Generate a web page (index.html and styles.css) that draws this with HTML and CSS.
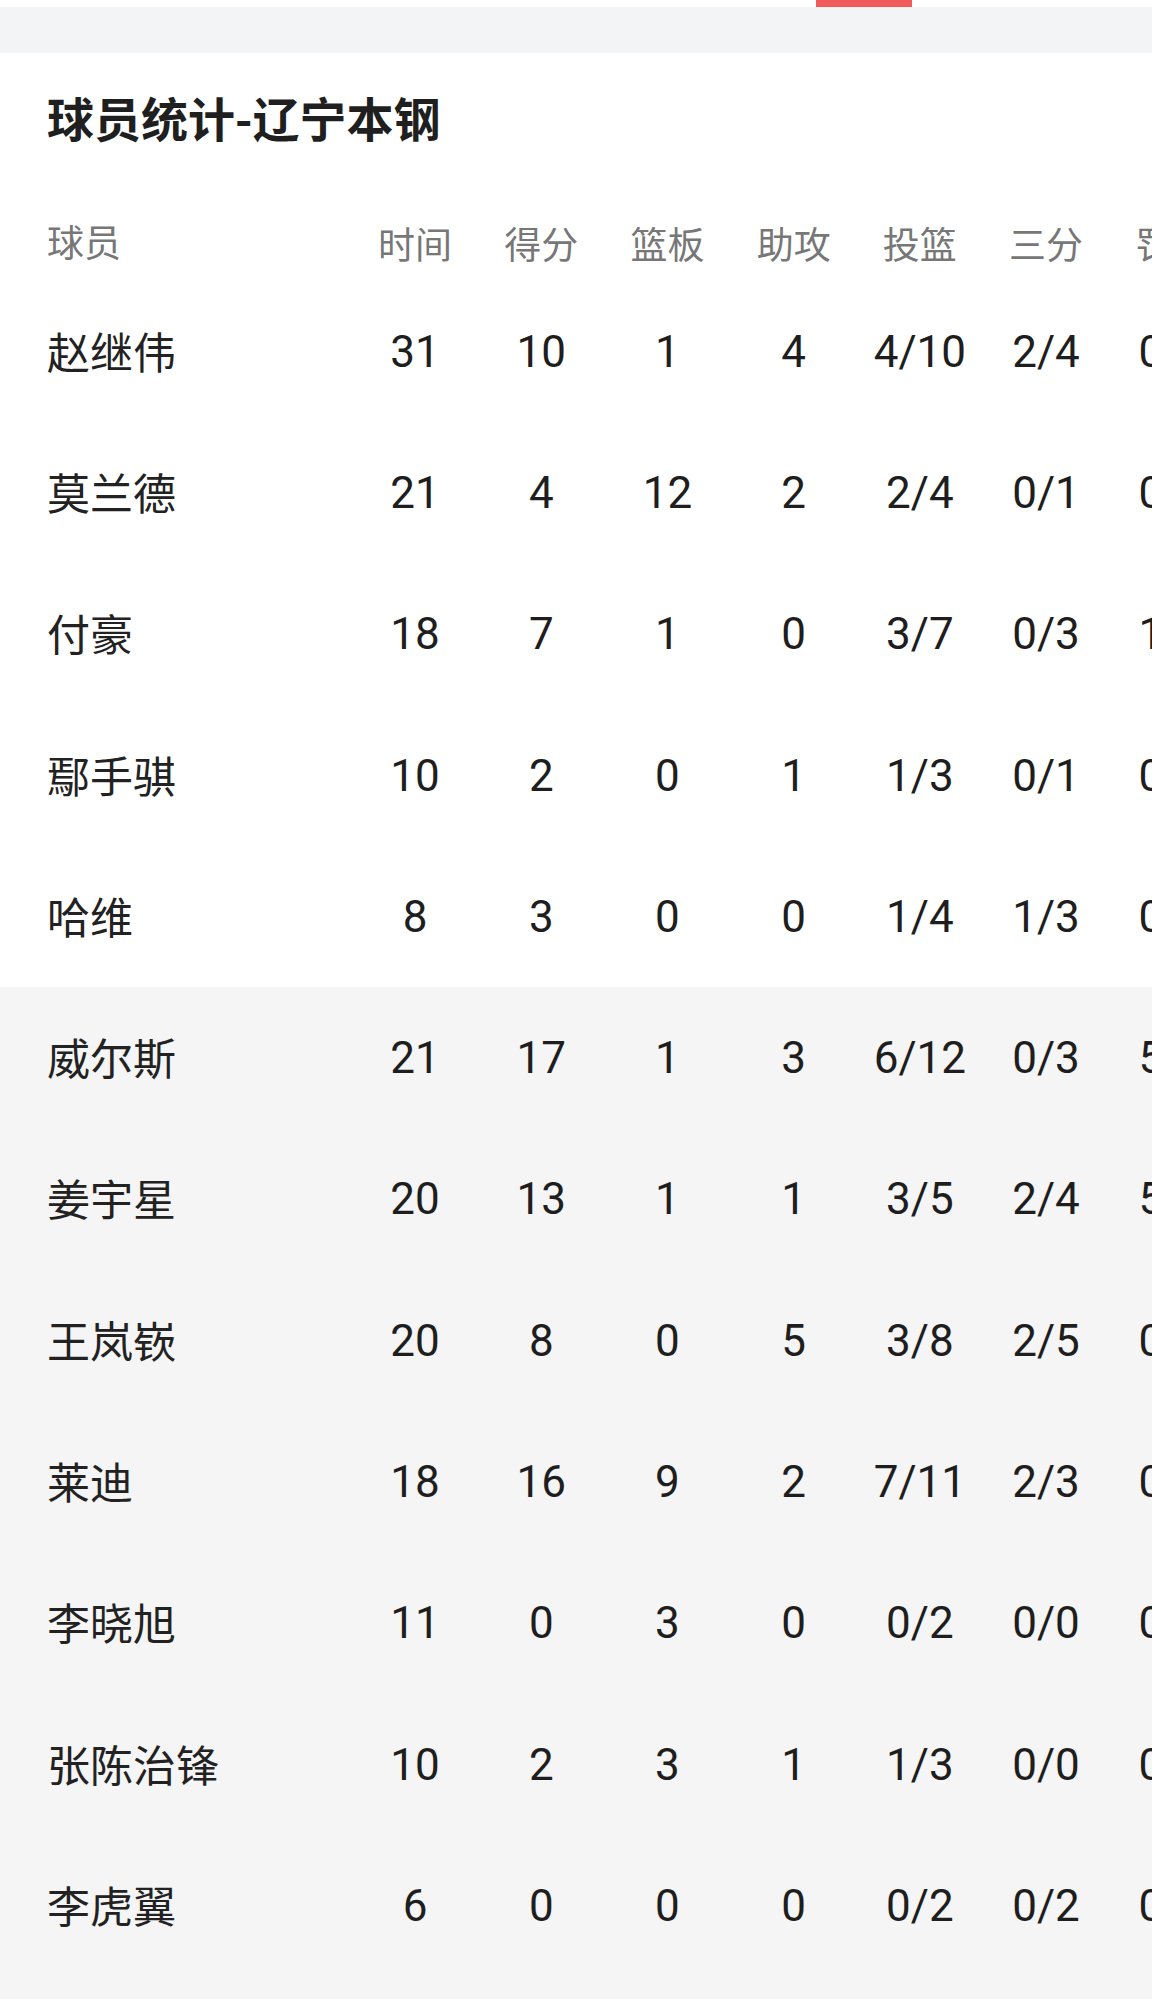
FILE: index.html
```html
<!DOCTYPE html>
<html lang="zh-CN">
<head>
<meta charset="utf-8">
<title>球员统计-辽宁本钢</title>
<link rel="stylesheet" href="styles.css">
</head>
<body>
<div class="topbar"><span class="tab-indicator"></span></div>
<div class="gap"></div>
<section class="card">
  <h2 class="title">球员统计-辽宁本钢</h2>
  <div class="table">
    <div class="row head">
      <span class="name">球员</span>
      <span>时间</span><span>得分</span><span>篮板</span><span>助攻</span><span>投篮</span><span>三分</span><span>罚球</span>
    </div>
    <div class="group starters">
      <div class="row"><span class="name">赵继伟</span><span>31</span><span>10</span><span>1</span><span>4</span><span>4/10</span><span>2/4</span><span>0/0</span></div>
      <div class="row"><span class="name">莫兰德</span><span>21</span><span>4</span><span>12</span><span>2</span><span>2/4</span><span>0/1</span><span>0/0</span></div>
      <div class="row"><span class="name">付豪</span><span>18</span><span>7</span><span>1</span><span>0</span><span>3/7</span><span>0/3</span><span>1/2</span></div>
      <div class="row"><span class="name">鄢手骐</span><span>10</span><span>2</span><span>0</span><span>1</span><span>1/3</span><span>0/1</span><span>0/0</span></div>
      <div class="row"><span class="name">哈维</span><span>8</span><span>3</span><span>0</span><span>0</span><span>1/4</span><span>1/3</span><span>0/0</span></div>
    </div>
    <div class="group bench">
      <div class="row"><span class="name">威尔斯</span><span>21</span><span>17</span><span>1</span><span>3</span><span>6/12</span><span>0/3</span><span>5/6</span></div>
      <div class="row"><span class="name">姜宇星</span><span>20</span><span>13</span><span>1</span><span>1</span><span>3/5</span><span>2/4</span><span>5/5</span></div>
      <div class="row"><span class="name">王岚嵚</span><span>20</span><span>8</span><span>0</span><span>5</span><span>3/8</span><span>2/5</span><span>0/0</span></div>
      <div class="row"><span class="name">莱迪</span><span>18</span><span>16</span><span>9</span><span>2</span><span>7/11</span><span>2/3</span><span>0/0</span></div>
      <div class="row"><span class="name">李晓旭</span><span>11</span><span>0</span><span>3</span><span>0</span><span>0/2</span><span>0/0</span><span>0/0</span></div>
      <div class="row"><span class="name">张陈治锋</span><span>10</span><span>2</span><span>3</span><span>1</span><span>1/3</span><span>0/0</span><span>0/0</span></div>
      <div class="row"><span class="name">李虎翼</span><span>6</span><span>0</span><span>0</span><span>0</span><span>0/2</span><span>0/2</span><span>0/0</span></div>
    </div>
  </div>
</section>
</body>
</html>
```

FILE: styles.css
```css
html {
  background: #f5f5f5;
}
body {
  margin: 0;
  background: #f5f5f5;
  font-family: "Noto Sans CJK SC", "Noto Sans", sans-serif;
  color: #222222;
  overflow: hidden;
}
.topbar {
  height: 7px;
  background: #ffffff;
  display: flex;
}
.tab-indicator {
  display: block;
  width: 96px;
  height: 7px;
  margin-left: 816px;
  background: #f15b5b;
}
.gap {
  height: 46px;
  background: #f3f4f5;
}
.card {
  background: #ffffff;
}
.title {
  margin: 0;
  padding: 34px 0 58px 47px;
  font-size: 47px;
  line-height: 60px;
  font-weight: 700;
  color: #1f1f1f;
}
.table {
  overflow: hidden;
  width: 1152px;
}
.row {
  display: grid;
  grid-template-columns: 352px repeat(7, 126.2px);
  align-items: center;
  height: 141.3px;
  font-family: Roboto, "Noto Sans CJK SC", sans-serif;
  font-size: 44px;
  line-height: 50px;
  color: #1e1e1e;
  white-space: nowrap;
}
.row span {
  text-align: center;
}
.row .name {
  text-align: left;
  padding-left: 47px;
  padding-bottom: 4px;
  font-family: "Noto Sans CJK SC", sans-serif;
  font-size: 43px;
  color: #222222;
}
.row.head {
  height: 76px;
  font-family: "Noto Sans CJK SC", sans-serif;
  font-size: 37px;
  color: #777777;
}
.row.head .name {
  font-size: 37px;
  color: #777777;
}
.starters {
  background: #ffffff;
}
.bench {
  background: #f5f5f5;
}
```
